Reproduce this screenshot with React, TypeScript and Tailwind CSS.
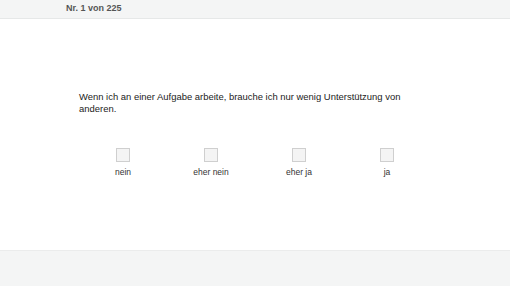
export default function App() {
  const opts = ["nein", "eher nein", "eher ja", "ja"];
  return (
    <div className="w-[510px] h-[286px] flex flex-col bg-white" style={{ fontFamily: '"Liberation Sans", Arial, sans-serif' }}>
      <div className="h-[19px] bg-[#f4f5f5] border-b border-[#e6e8e8] flex items-center pl-[66px]">
        <span className="text-[9px] font-bold text-[#555]">Nr. 1 von 225</span>
      </div>
      <div className="flex-1 pl-[79px] pt-[72px]">
        <p className="text-[9.45px] leading-[12px] text-[#222] w-[340px]">
          Wenn ich an einer Aufgabe arbeite, brauche ich nur wenig Unterstützung von anderen.
        </p>
        <div className="grid grid-cols-4 w-[352px] mt-[33px]">
          {opts.map((o) => (
            <div key={o} className="flex flex-col items-center">
              <div className="w-[14px] h-[14px] bg-[#f4f4f4] border border-[#cfcfcf]" />
              <span className="mt-[5px] text-[8.5px] leading-[10px] text-[#333]">{o}</span>
            </div>
          ))}
        </div>
      </div>
      <div className="h-[36px] bg-[#f4f5f5] border-t border-[#ebecec]" />
    </div>
  );
}
